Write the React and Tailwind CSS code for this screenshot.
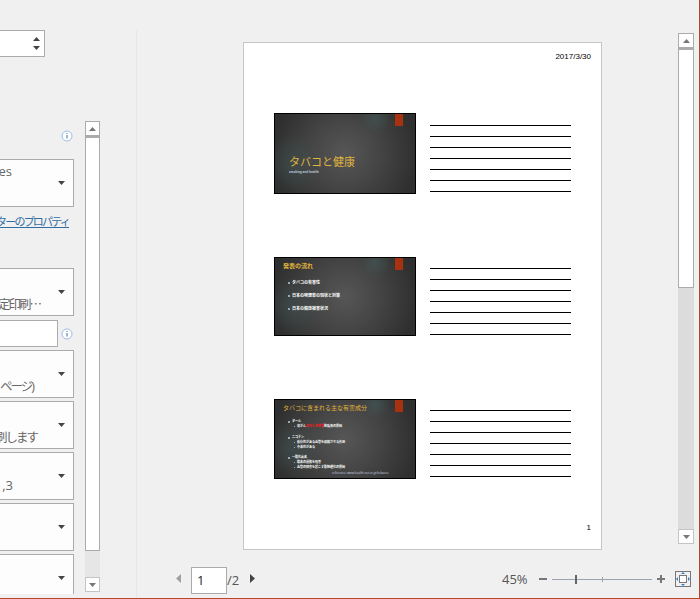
const FONT = "font-['Open_Sans','Noto_Sans_CJK_JP',sans-serif]";

function Caret({ className = "" }) {
  return (
    <svg width="7" height="4" viewBox="0 0 7 4" className={className}>
      <path d="M0 0H7L3.5 4Z" fill="#444" />
    </svg>
  );
}

function Info({ className = "" }) {
  return (
    <svg width="12" height="12" viewBox="0 0 12 12" className={className}>
      <circle cx="6" cy="6" r="5" fill="#fff" stroke="#9dbce8" strokeWidth="1" />
      <rect x="5.5" y="5" width="1" height="3.5" fill="#3f6fb0" />
      <rect x="5.5" y="3" width="1" height="1" fill="#3f6fb0" />
    </svg>
  );
}

function Dropdown({ top, bottom, textClass = "w-[50px]", className = "h-[48px] mb-[3px]" }) {
  return (
    <div className={`w-[74px] ${className} shrink-0 border border-l-0 border-[#ababab] bg-[#fdfdfd] flex overflow-hidden`}>
      <div className={`${textClass} flex flex-col justify-between items-end text-[13px] leading-[18px] text-[#666] overflow-hidden whitespace-nowrap pt-[2px] pb-[3px]`}>
        <span>{top}</span>
        <span>{bottom}</span>
      </div>
      <div className="flex-1" />
      <div className="w-[23px] shrink-0 flex items-center justify-center">
        <Caret />
      </div>
    </div>
  );
}

function Cjk({ children }) {
  return <span className="relative top-[2px] pr-[2px] text-[12.5px] tracking-[-2px]">{children}</span>;
}

function ScrollBtn({ up, light }) {
  return (
    <div className={`h-[15px] w-full shrink-0 bg-white border ${light ? "border-[#c4c4c4]" : "border-[#ababab]"} flex items-center justify-center`}>
      <svg width="7" height="4" viewBox="0 0 7 4">
        <path d={up ? "M0 4H7L3.5 0Z" : "M0 0H7L3.5 4Z"} fill="#777" />
      </svg>
    </div>
  );
}

function Slide({ children, className = "h-[81px]" }) {
  return (
    <div className={`w-[142px] ${className} shrink-0 border border-black overflow-hidden flex flex-col bg-[radial-gradient(circle_at_12%_62%,rgba(70,100,100,0.35)_0%,rgba(70,100,100,0)_22%),radial-gradient(circle_at_72%_5%,rgba(70,105,105,0.4)_0%,rgba(70,105,105,0)_12%),radial-gradient(circle_at_50%_50%,#565656_0%,#464646_40%,#2f2f2f_90%)]`}>
      <div className="flex justify-end pr-[12px] h-0">
        <div className="w-[8px] h-[12px] bg-[#a8320f] shrink-0" />
      </div>
      {children}
    </div>
  );
}

function Lines({ className = "" }) {
  return (
    <div className={`w-[141px] shrink-0 flex flex-col gap-[10px] ${className}`}>
      {[0, 1, 2, 3, 4, 5, 6].map((i) => (
        <div key={i} className="h-px bg-black" />
      ))}
    </div>
  );
}

function Tiny({ children, className = "" }) {
  return (
    <div className={`flex items-center gap-[2px] whitespace-nowrap ${className}`}>
      <span className="w-[2px] h-[2px] bg-[#9aa7b5] shrink-0" />
      <span>{children}</span>
    </div>
  );
}

function Sub({ children, className = "" }) {
  return (
    <div className={`flex items-center gap-[2px] pl-[6px] whitespace-nowrap ${className}`}>
      <span className="w-[1px] h-[1px] bg-[#9aa7b5] shrink-0" />
      <span>{children}</span>
    </div>
  );
}

export default function App() {
  return (
    <div className={`w-[700px] h-[599px] bg-[#f0f0f0] overflow-hidden flex ${FONT} border-r border-b border-[#b7472a]`}>
      {/* left panel */}
      <div className="w-[137px] shrink-0 border-r border-[#e6e6e6] flex mt-[30px]">
        <div className="w-[85px] h-[564px] shrink-0 flex flex-col overflow-hidden">
          <div className="w-[45px] h-[27px] shrink-0 border border-l-0 border-[#ababab] bg-white flex flex-col items-end justify-center gap-[5px] pr-[4px]">
            <svg width="7" height="4" viewBox="0 0 7 4"><path d="M0 4H7L3.5 0Z" fill="#444" /></svg>
            <Caret />
          </div>
          <div className="h-[102px] shrink-0 flex items-end pb-[17px]">
            <Info className="ml-[61px]" />
          </div>
          <Dropdown top="es" bottom="" textClass="w-[12px]" className="h-[48px]" />
          <div className="w-[69px] mt-[6px] h-[20px] overflow-hidden flex justify-end shrink-0">
            <span className="text-[11px] leading-[18px] tracking-[-1.8px] text-[#2f6ea5] underline whitespace-nowrap">ターのプロパティ</span>
          </div>
          <div className="h-[35px] shrink-0" />
          <Dropdown top="" bottom={<Cjk>定印刷<span className="font-['Noto_Sans_CJK_JP',sans-serif] tracking-normal">…</span></Cjk>} textClass="w-[44px]" className="h-[48px] mb-[4px]" />
          <div className="flex items-center h-[27px] mb-[3px] shrink-0">
            <div className="w-[58px] h-[27px] border border-l-0 border-[#ababab] bg-white" />
            <Info className="ml-[3px]" />
          </div>
          <Dropdown top="" bottom={<Cjk>ページ)</Cjk>} textClass="w-[35px]" />
          <Dropdown top="" bottom={<Cjk>刷します</Cjk>} textClass="w-[39px]" />
          <Dropdown top="" bottom={<span className="relative -top-[2px]">,3</span>} textClass="w-[13px]" />
          <Dropdown top="" bottom="" />
          <Dropdown top="" bottom="" />
        </div>
        <div className="w-[15px] h-[471px] shrink-0 flex flex-col mt-[91px] bg-[#e6e6e6]">
          <ScrollBtn up />
          <div className="h-[415px] shrink-0 bg-white border-x border-b border-t-2 border-[#ababab]" />
          <div className="flex-1" />
          <ScrollBtn light />
        </div>
      </div>

      {/* preview */}
      <div className="flex-1 flex flex-col min-w-0">
        <div className="h-[566px] shrink-0 flex">
          <div className="w-[540px] shrink-0 pt-[42px]">
            <div className="w-[359px] h-[508px] ml-[106px] bg-white border border-[#c6c6c6] flex flex-col pl-[30px]">
              <div className="h-[70px] shrink-0 flex justify-end pt-[8px] pr-[10px]">
                <span className="text-[8px] leading-[12px] text-black font-['Liberation_Sans',sans-serif]">2017/3/30</span>
              </div>
              <div className="flex gap-[14px]">
                <Slide>
                  <div className="pl-[14px] pt-[40px] text-[#e0b43c] text-[11px] leading-[16px] whitespace-nowrap">タバコと健康</div>
                  <div className="pl-[14px] text-[3px] leading-[4px] font-bold text-[#bcc6d6] whitespace-nowrap">smoking and health</div>
                </Slide>
                <Lines className="mt-[12px]" />
              </div>
              <div className="flex gap-[14px] mt-[63px]">
                <Slide className="h-[79px]">
                  <div className="pl-[8px] pt-[4px] text-[#e0b43c] text-[6px] leading-[9px] font-bold whitespace-nowrap">発表の流れ</div>
                  <div className="flex flex-col gap-[7px] pl-[13px] pt-[9px] text-[4px] leading-[6px] font-bold text-white">
                    <Tiny>タバコの有害性</Tiny>
                    <Tiny>日本の喫煙率の現状と対策</Tiny>
                    <Tiny>日本の健康被害状況</Tiny>
                  </div>
                </Slide>
                <Lines className="mt-[11px]" />
              </div>
              <div className="flex gap-[14px] mt-[63px]">
                <Slide className="h-[80px]">
                  <div className="pl-[8px] pt-[4px] text-[#e0b43c] text-[6px] leading-[9px] whitespace-nowrap">タバコに含まれる主な有害成分</div>
                  <div className="flex flex-col pl-[13px] pt-[6px] text-[3px] leading-[5px] font-bold text-white">
                    <Tiny>タール</Tiny>
                    <Sub>発がん<span className="text-[#ff1a1a]">発がん性物質</span>肺疾患の原因</Sub>
                    <Tiny className="mt-[6px]">ニコチン</Tiny>
                    <Sub>依存性がある血管を収縮させる作用</Sub>
                    <Sub>中毒性がある</Sub>
                    <Tiny className="mt-[5px]">一酸化炭素</Tiny>
                    <Sub>酸素の運搬を阻害</Sub>
                    <Sub>血管の障害を起こす動脈硬化の原因</Sub>
                    <div className="pl-[44px] pt-[1px] whitespace-nowrap text-[#cfd8e6] font-normal text-[3px] leading-[4px]">reference: www.health-net.or.jp/tobacco</div>
                  </div>
                </Slide>
                <Lines className="mt-[11px]" />
              </div>
              <div className="flex-1 flex justify-end items-end pb-[16px] pr-[10px]">
                <span className="text-[8px] leading-[10px] text-black font-['Liberation_Sans',sans-serif]">1</span>
              </div>
            </div>
          </div>
          {/* right scrollbar */}
          <div className="w-[16px] ml-px h-[511px] mt-[33px] shrink-0 flex flex-col bg-[#dcdcdc]">
            <ScrollBtn up />
            <div className="h-[240px] shrink-0 bg-white border-x border-b border-t-2 border-[#ababab]" />
            <div className="flex-1" />
            <ScrollBtn light />
          </div>
        </div>
        <div className="flex-1 flex items-start">
          <svg width="5" height="9" viewBox="0 0 5 9" className="ml-[39px] mt-[8px] shrink-0"><path d="M5 0V9L0 4.5Z" fill="#a0a0a0" /></svg>
          <div className="w-[36px] h-[27px] ml-[10px] mt-px shrink-0 border border-[#ababab] bg-white text-[13px] leading-[25px] pl-[5px] text-[#1c1c1c]">1</div>
          <span className="text-[13px] leading-[25px] mt-[2px] text-[#555] w-[23px] shrink-0">/2</span>
          <svg width="5" height="9" viewBox="0 0 5 9" className="mt-[8px] shrink-0"><path d="M0 0V9L5 4.5Z" fill="#444" /></svg>
          <span className="ml-[247px] text-[13px] leading-[25px] mt-px text-[#555] w-[26px] shrink-0">45%</span>
          <div className="ml-[11px] mt-[12px] w-[8px] h-[2px] bg-[#777] shrink-0" />
          <div className="ml-[5px] w-[100px] h-[10px] mt-[8px] flex items-center shrink-0">
            <div className="w-[23px] h-px bg-[#9aa5b1]" />
            <div className="w-[2px] h-[9px] bg-[#666] shrink-0" />
            <div className="w-[25px] h-px bg-[#9aa5b1]" />
            <div className="w-px h-[5px] bg-[#9aa5b1] shrink-0" />
            <div className="flex-1 h-px bg-[#9aa5b1]" />
          </div>
          <svg width="8" height="8" viewBox="0 0 8 8" className="ml-[5px] mt-[9px] shrink-0"><path d="M3 0H5V3H8V5H5V8H3V5H0V3H3Z" fill="#777" /></svg>
          <svg width="16" height="16" viewBox="0 0 16 16" className="ml-[10px] mt-[5px] shrink-0">
            <rect x="0.5" y="0.5" width="15" height="15" fill="none" stroke="#777" />
            <rect x="4.5" y="4.5" width="7" height="7" fill="#fff" stroke="#777" />
            <path d="M8 1L10 3H6ZM8 15L10 13H6ZM1 8L3 6V10ZM15 8L13 6V10Z" fill="#3f7fc4" />
          </svg>
        </div>
      </div>
    </div>
  );
}
